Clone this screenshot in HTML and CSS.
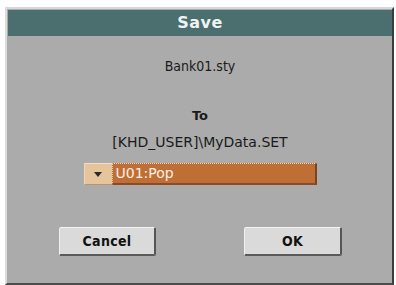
FILE: index.html
```html
<!DOCTYPE html>
<html>
<head>
<meta charset="utf-8">
<link rel="stylesheet" href="styles.css">
</head>
<body>
<div class="panel">
  <div class="titlebar">Save</div>
  <div class="line file">Bank01.sty</div>
  <div class="line to">To</div>
  <div class="line path">[KHD_USER]\MyData.SET</div>
  <div class="dropdown">
    <div class="dd-btn"><span class="tri"></span></div>
    <div class="dd-field">U01:Pop</div>
  </div>
  <div class="buttons">
    <div class="btn">Cancel</div>
    <div class="btn">OK</div>
  </div>
</div>
</body>
</html>
```
FILE: styles.css
```css
html, body {
  margin: 0;
  padding: 0;
  background: #ffffff;
}
body {
  width: 396px;
  height: 285px;
  overflow: hidden;
  font-family: "DejaVu Sans Condensed", "DejaVu Sans", sans-serif;
  font-stretch: condensed;
}
.panel {
  box-sizing: border-box;
  margin: 7px 0 0 5px;
  width: 389px;
  height: 278px;
  background: #ababab;
  border-left: 2px solid #dcdcdc;
  border-top: 2px solid #d8d8d8;
  border-right: 2px solid #3c3c3c;
  border-bottom: 2px solid #4a4a4a;
  padding: 1px 0 0 1px;
  display: flex;
  flex-direction: column;
  align-items: stretch;
}
.titlebar {
  height: 26px;
  background: #4b6f6f;
  color: #eef4f4;
  font-family: "DejaVu Sans", sans-serif;
  font-stretch: normal;
  font-weight: bold;
  font-size: 16px;
  letter-spacing: 0.5px;
  line-height: 26px;
  text-align: center;
}
.line {
  height: 16px;
  line-height: 16px;
  text-align: center;
  color: #1a1a1a;
  font-size: 14px;
}
.file { margin-top: 22px; }
.to {
  margin-top: 34px;
  font-weight: bold;
  font-family: "DejaVu Sans", sans-serif;
  font-stretch: normal;
  font-size: 13px;
}
.path {
  margin-top: 10px;
  font-family: "DejaVu Sans", sans-serif;
  font-stretch: normal;
  font-size: 14px;
}
.dropdown {
  margin: 13px auto 0;
  width: 233px;
  height: 22px;
  display: flex;
}
.dd-btn {
  box-sizing: border-box;
  width: 28px;
  height: 22px;
  background: #e6c49c;
  border-top: 1px solid #f4dcc0;
  border-left: 1px solid #f0d6b6;
  border-bottom: 1px solid #b8956c;
  display: flex;
  align-items: center;
  justify-content: center;
}
.tri {
  width: 0;
  height: 0;
  border-left: 4px solid transparent;
  border-right: 4px solid transparent;
  border-top: 5px solid #2a2a2a;
}
.dd-field {
  box-sizing: border-box;
  flex: 1;
  height: 22px;
  background: #bf6f36;
  border-top: 1px dotted #f2d2b0;
  border-left: 1px dotted #f0c8a0;
  border-right: 2px solid #7a4422;
  border-bottom: 2px solid #8a4c26;
  color: #fbf0e6;
  font-family: "DejaVu Sans", sans-serif;
  font-stretch: normal;
  font-size: 14px;
  line-height: 19px;
  padding-left: 3px;
}
.buttons {
  margin-top: 42px;
  display: flex;
  justify-content: space-between;
  padding: 0 50px 0 51px;
}
.btn {
  box-sizing: border-box;
  width: 97px;
  height: 29px;
  background: #dadada;
  border-top: 1px solid #f4f4f4;
  border-left: 1px solid #f0f0f0;
  border-right: 2px solid #555;
  border-bottom: 2px solid #5a5a5a;
  border-radius: 2px;
  text-align: center;
  font-family: "DejaVu Sans Condensed", "DejaVu Sans", sans-serif;
  font-stretch: condensed;
  font-weight: bold;
  font-size: 14px;
  letter-spacing: 0.3px;
  line-height: 26px;
  color: #111;
}
.btn + .btn { width: 98px; }
```
